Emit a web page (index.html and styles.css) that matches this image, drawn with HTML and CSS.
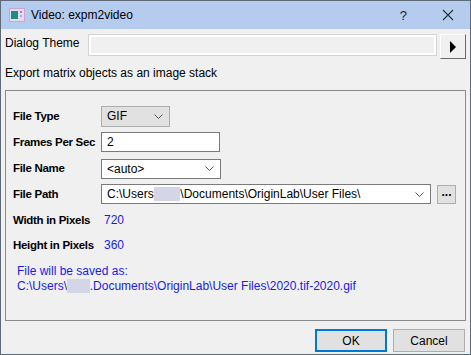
FILE: index.html
```html
<!DOCTYPE html>
<html lang="en">
<head>
    <meta charset="UTF-8">
    <title>Video: expm2video</title>
    <link rel="stylesheet" href="styles.css">
</head>
<body>
    <div class="window">
        <div class="titlebar">
            <svg class="app-icon" width="16" height="14" viewBox="0 0 16 14">
                <rect x="0.5" y="0.5" width="15" height="13" fill="#e6d9ec" stroke="#c9a6d4"/>
                <rect x="2" y="3" width="7" height="8" fill="#1c8c86"/>
                <rect x="11" y="3" width="2" height="2" fill="#9a8fb8"/>
                <rect x="11" y="7" width="2" height="2" fill="#b8acd0"/>
            </svg>
            <span class="title">Video: expm2video</span>
            <span class="help">?</span>
            <svg class="close" width="12" height="12" viewBox="0 0 12 12">
                <path d="M1 1 L11 11 M11 1 L1 11" stroke="#1a3a38" stroke-width="1.1"/>
            </svg>
        </div>

        <div class="content">
            <div class="theme-row">
                <span class="theme-label">Dialog Theme</span>
                <div class="theme-box"></div>
                <button class="theme-arrow">
                    <svg width="8" height="12" viewBox="0 0 8 12"><path d="M1 0 L7 6 L1 12 Z" fill="#000"/></svg>
                </button>
            </div>

            <p class="desc">Export matrix objects as an image stack</p>

            <div class="group">
                <div class="row">
                    <span class="label">File Type</span>
                    <div class="combo combo-gray combo-type">
                        <span>GIF</span>
                        <svg class="chev" width="9" height="5" viewBox="0 0 9 5"><path d="M0.5 0.5 L4.5 4.5 L8.5 0.5" fill="none" stroke="#555"/></svg>
                    </div>
                </div>
                <div class="row">
                    <span class="label">Frames Per Sec</span>
                    <div class="edit edit-fps">2</div>
                </div>
                <div class="row">
                    <span class="label">File Name</span>
                    <div class="combo combo-name">
                        <span>&lt;auto&gt;</span>
                        <svg class="chev" width="9" height="5" viewBox="0 0 9 5"><path d="M0.5 0.5 L4.5 4.5 L8.5 0.5" fill="none" stroke="#555"/></svg>
                    </div>
                </div>
                <div class="row">
                    <span class="label">File Path</span>
                    <div class="combo combo-path">
                        <span>C:\Users<span class="blur">\user</span>\Documents\OriginLab\User Files\</span>
                        <svg class="chev" width="9" height="5" viewBox="0 0 9 5"><path d="M0.5 0.5 L4.5 4.5 L8.5 0.5" fill="none" stroke="#555"/></svg>
                    </div>
                    <button class="browse">...</button>
                </div>
                <div class="row row-value">
                    <span class="label">Width in Pixels</span>
                    <span class="value">720</span>
                </div>
                <div class="row row-value">
                    <span class="label">Height in Pixels</span>
                    <span class="value">360</span>
                </div>
                <div class="saved">
                    <div>File will be saved as:</div>
                    <div>C:\Users\<span class="blur">user</span>.Documents\OriginLab\User Files\2020.tif-2020.gif</div>
                </div>
            </div>

            <div class="buttons">
                <button class="btn btn-default">OK</button>
                <button class="btn">Cancel</button>
            </div>
        </div>
    </div>
</body>
</html>
```

FILE: styles.css
```css
* {
    box-sizing: border-box;
}

body {
    margin: 0;
    font-family: 'Liberation Sans', Arial, sans-serif;
    font-size: 12px;
    color: #000;
    background: #f0f0f0;
}

.window {
    width: 471px;
    height: 355px;
    border: 1px solid #5e6a78;
    background: #f0f0f0;
    display: flex;
    flex-direction: column;
}

/* Barra de titulo */
.titlebar {
    height: 28px;
    background: #b5ccee;
    display: flex;
    align-items: center;
    padding-left: 8px;
}

.app-icon {
    margin-right: 6px;
}

.title {
    flex: 1;
    font-size: 12px;
    color: #000;
}

.help {
    font-size: 13px;
    color: #222;
    margin-right: 35px;
}

.close {
    margin-right: 16px;
}

.content {
    flex: 1;
    padding: 5px 4px 0 4px;
    display: flex;
    flex-direction: column;
}

/* Tema */
.theme-row {
    display: flex;
    align-items: flex-start;
    height: 26px;
}

.theme-label {
    width: 83px;
    line-height: 16px;
    padding-top: 1px;
}

.theme-box {
    width: 350px;
    height: 22px;
    border: 1px solid #d4d4d4;
    background: #f0f0f0;
    box-shadow: inset 0 0 0 2px #fff;
}

.theme-arrow {
    margin-left: 3px;
    width: 26px;
    height: 25px;
    padding: 0;
    border: 1px solid #fff;
    border-right-color: #696969;
    border-bottom-color: #696969;
    background: #f0f0f0;
    display: flex;
    align-items: center;
    justify-content: center;
}

.desc {
    margin: 5px 0 0 0;
    line-height: 16px;
}

/* Grupo */
.group {
    margin-top: 9px;
    height: 231px;
    border: 1px solid #8a8a8a;
    padding: 15px 0 0 7px;
    display: flex;
    flex-direction: column;
}

.row {
    display: flex;
    align-items: center;
    height: 20px;
    margin-bottom: 6px;
}

.row-value {
    margin-bottom: 5px;
}

.label {
    flex: 0 0 88px;
    width: 88px;
    font-size: 11.5px;
    font-weight: bold;
    white-space: nowrap;
    letter-spacing: -0.3px;
}

.combo, .edit {
    height: 20px;
    border: 1px solid #7a7a7a;
    background: #fff;
    display: flex;
    align-items: center;
    padding: 0 6px 0 5px;
}

.combo span:first-child {
    flex: 1;
    white-space: nowrap;
}

.combo-gray {
    background: #e1e1e1;
    border-color: #adadad;
}

.combo-type {
    width: 69px;
    height: 21px;
}

.edit-fps {
    width: 119px;
}

.combo-name {
    width: 120px;
    margin-top: 1px;
}

.combo-path {
    width: 330px;
}

.blur {
    color: transparent;
    background: #d4d6e8;
}

.browse {
    margin-left: 6px;
    width: 19px;
    height: 19px;
    padding: 0 0 4px 0;
    border: 1px solid #adadad;
    background: #e1e1e1;
    font-family: 'Liberation Sans', Arial, sans-serif;
    font-size: 12px;
    font-weight: bold;
    line-height: 10px;
}

.value {
    color: #1a1aee;
    padding-left: 3px;
}

.saved {
    margin-top: 4px;
    padding-left: 4px;
    color: #1a1aee;
    line-height: 15px;
}

/* Botoes */
.buttons {
    display: flex;
    justify-content: flex-end;
    gap: 6px;
    margin-top: 8px;
    padding-right: 1px;
}

.btn {
    width: 72px;
    height: 23px;
    border: 1px solid #adadad;
    background: #e1e1e1;
    font-family: 'Liberation Sans', Arial, sans-serif;
    font-size: 12px;
    padding: 0;
}

.btn-default {
    border: 2px solid #0078d7;
}
```
